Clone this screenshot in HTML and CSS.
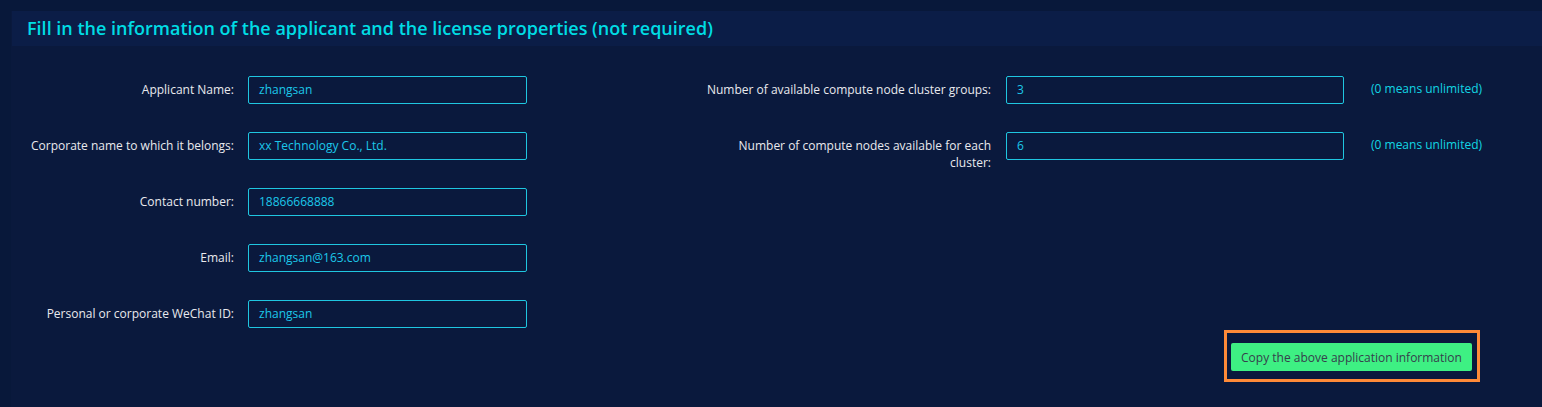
FILE: index.html
```html
<!DOCTYPE html>
<html>
<head>
<meta charset="utf-8">
<link rel="stylesheet" href="styles.css">
</head>
<body>
<div class="panel">
  <div class="panel-head">Fill in the information of the applicant and the license properties (not required)</div>
  <div class="panel-body">
    <div class="col col-left">
      <div class="row"><label class="lbl">Applicant Name:</label><div class="inp">zhangsan</div></div>
      <div class="row"><label class="lbl">Corporate name to which it belongs:</label><div class="inp">xx Technology Co., Ltd.</div></div>
      <div class="row"><label class="lbl">Contact number:</label><div class="inp">18866668888</div></div>
      <div class="row"><label class="lbl">Email:</label><div class="inp">zhangsan@163.com</div></div>
      <div class="row"><label class="lbl">Personal or corporate WeChat ID:</label><div class="inp">zhangsan</div></div>
    </div>
    <div class="col col-right">
      <div class="row"><label class="lbl">Number of available compute node cluster groups:</label><div class="inp">3</div><span class="hint">(0 means unlimited)</span></div>
      <div class="row"><label class="lbl">Number of compute nodes available for each cluster:</label><div class="inp">6</div><span class="hint">(0 means unlimited)</span></div>
      <div class="actions">
        <div class="highlight"><button class="btn">Copy the above application information</button></div>
      </div>
    </div>
  </div>
</div>
</body>
</html>
```
FILE: styles.css
```css
html, body {
  margin: 0;
  padding: 0;
  background: #08183a;
  height: 100%;
}
body {
  font-family: "Open Sans", "Noto Sans", sans-serif;
  overflow: hidden;
}
.panel {
  margin: 11px 0 0 11px;
  background: #0a193d;
  height: calc(100% - 11px);
}
.panel-head {
  height: 35px;
  line-height: 35px;
  background: #0b1d47;
  color: #00dce4;
  font-size: 18px;
  font-weight: 600;
  padding-left: 15px;
  margin-left: 1px;
}
.panel-body {
  display: flex;
  padding-top: 30px;
}
.col {
  display: flex;
  flex-direction: column;
  gap: 28px;
}
.row {
  display: flex;
  align-items: flex-start;
  min-height: 28px;
}
.lbl {
  color: #e9e9ee;
  font-size: 12px;
  line-height: 17px;
  padding-top: 5px;
  text-align: right;
  box-sizing: border-box;
}
.col-left .lbl {
  width: 237px;
  padding-right: 14px;
}
.col-left .inp {
  width: 279px;
}
.col-right {
  margin-left: 174px;
}
.col-right .lbl {
  width: 305px;
  padding-right: 15px;
}
.col-right .inp {
  width: 338px;
}
.inp {
  box-sizing: border-box;
  height: 28px;
  border: 1px solid #1fc6e0;
  border-radius: 2px;
  color: #1cc8ea;
  font-size: 12px;
  line-height: 26px;
  padding-left: 10px;
}
.hint {
  color: #12d6e4;
  font-size: 12px;
  line-height: 17px;
  padding-top: 4px;
  margin-left: 27px;
}
.actions {
  display: flex;
  margin-top: 131px;
  padding-left: 523px;
}
.highlight {
  border: 3px solid #ff8a38;
  padding: 10px 5px 8px 4px;
}
.btn {
  width: 241px;
  height: 28px;
  background: #3ef083;
  border: none;
  border-radius: 2px;
  color: #36404c;
  font-family: "Open Sans", "Noto Sans", sans-serif;
  font-size: 12px;
  padding: 0;
}
```
